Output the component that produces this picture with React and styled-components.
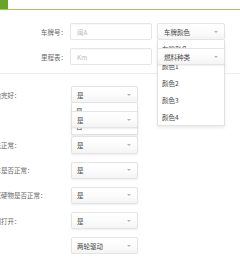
import styled, { createGlobalStyle } from 'styled-components';

const GlobalStyle = createGlobalStyle`
  html, body {
    margin: 0;
    background: #fff;
    overflow: hidden;
  }

  body {
    font-family: 'Noto Sans CJK SC', 'Noto Sans', sans-serif;
    font-size: 6.5px;
    color: #444;
  }
`;

const Header = styled.div`
  height: 9px;
  border-bottom: 1px solid #9dcb62;
  display: flex;
`;

const Tab = styled.div`
  width: 8px;
  height: 9px;
  background: #67a52a;
`;

const TopSection = styled.div`
  padding: 13px 0 8px;
  border-bottom: 1px solid #ededed;
  display: flex;
  flex-direction: column;
  gap: 8px;
`;

const TopRow = styled.div`
  display: flex;
  align-items: center;
  gap: 5px;
`;

const TopLabel = styled.label`
  width: 67px;
  margin-right: -2px;
  text-align: right;
  color: #666;
  white-space: nowrap;
`;

const Input = styled.div`
  box-sizing: border-box;
  width: 82px;
  height: 17px;
  border: 1px solid #e6e6e6;
  border-radius: 2px;
  padding-left: 6px;
  display: flex;
  align-items: center;
  color: #bbb;
  box-shadow: inset 0 1px 1px rgba(0, 0, 0, 0.03);
`;

const SelectWrap = styled.div`
  position: relative;
  width: ${(p) => p.$width}px;
`;

const SelectBox = styled.div`
  box-sizing: border-box;
  height: ${(p) => p.$height}px;
  border: 1px solid #e4e4e4;
  border-radius: 2px;
  padding-left: ${(p) => p.$pad}px;
  display: flex;
  align-items: center;
  color: #444;
  background: linear-gradient(#fff 0%, #fcfcfc 50%, #f4f4f4 100%);
  box-shadow: 0 1px 2px rgba(0, 0, 0, 0.07);
  position: relative;

  &::after {
    content: '';
    position: absolute;
    right: 6px;
    top: 50%;
    margin-top: -1px;
    border-left: 2px solid transparent;
    border-right: 2px solid transparent;
    border-top: 2.5px solid #b5b5b5;
  }
`;

const DropList = styled.ul`
  position: absolute;
  top: 100%;
  left: 0;
  right: 0;
  margin: 0;
  padding: 0;
  list-style: none;
  background: #fff;
  border: 1px solid #e2e2e2;
  border-top: none;
  box-shadow: 0 2px 3px rgba(0, 0, 0, 0.08);
`;

const DropItem = styled.li`
  height: ${(p) => p.$height}px;
  padding-left: 4px;
  display: flex;
  align-items: center;
  color: #444;
`;

const FormList = styled.div`
  margin-left: -12px;
  padding-top: 12px;
  display: flex;
  flex-direction: column;
  gap: 8px;
`;

const FormRow = styled.div`
  display: flex;
  align-items: center;
`;

const RowLabel = styled.label`
  width: 83px;
  color: #666;
  white-space: nowrap;
`;

function Select({ value, width, height = 17, pad = 6, options, itemHeight = 17 }) {
  return (
    <SelectWrap $width={width}>
      <SelectBox $height={height} $pad={pad}>
        {value}
      </SelectBox>
      {options && (
        <DropList>
          {options.map((o) => (
            <DropItem key={o} $height={itemHeight}>
              {o}
            </DropItem>
          ))}
        </DropList>
      )}
    </SelectWrap>
  );
}

const rows = [
  { label: '轮胎完好：', value: '是', options: ['是', '否'] },
  { label: '', value: '是' },
  { label: '灯光正常：', value: '是' },
  { label: '刹车是否正常：', value: '是' },
  { label: '车底硬物是否正常：', value: '是' },
  { label: '车门打开：', value: '是' },
  { label: '', value: '两轮驱动' },
];

export default function App() {
  return (
    <>
      <GlobalStyle />
      <Header>
        <Tab />
      </Header>
      <TopSection>
        <TopRow>
          <TopLabel>车牌号：</TopLabel>
          <Input>闽A</Input>
          <Select
            value="车牌颜色"
            width={68}
            options={['车牌颜色', '颜色1', '颜色2', '颜色3', '颜色4']}
          />
        </TopRow>
        <TopRow>
          <TopLabel>里程表：</TopLabel>
          <Input>Km</Input>
          <Select value="燃料种类" width={68} />
        </TopRow>
      </TopSection>
      <FormList>
        {rows.map((r, i) => (
          <FormRow key={i}>
            <RowLabel>{r.label}</RowLabel>
            <Select
              value={r.value}
              width={67}
              height={17.2}
              pad={5}
              options={r.options}
              itemHeight={15.5}
            />
          </FormRow>
        ))}
      </FormList>
    </>
  );
}
